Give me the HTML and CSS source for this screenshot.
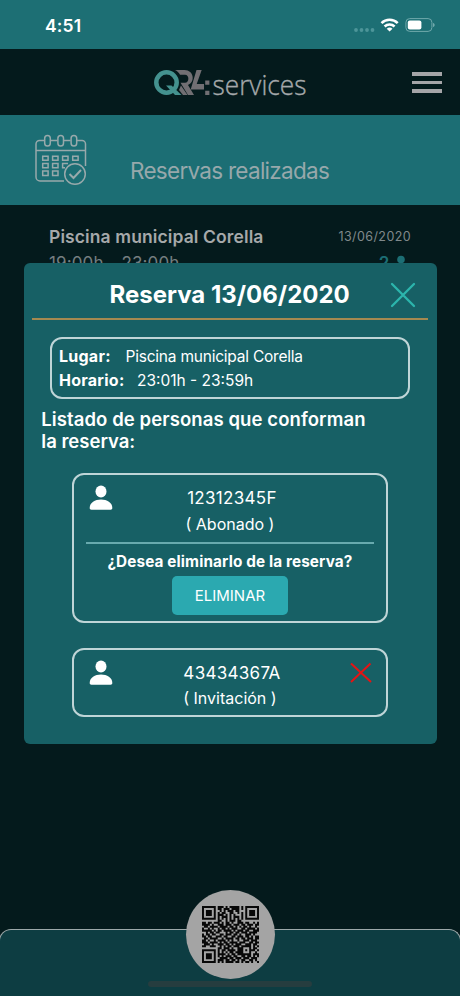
FILE: index.html
```html
<!DOCTYPE html>
<html lang="es">
<head>
<meta charset="utf-8">
<meta name="viewport" content="width=device-width, initial-scale=1">
<title>Reservas realizadas</title>
<link rel="stylesheet" href="styles.css">
</head>
<body>
<div class="screen">
  <div class="status">
    <span class="time">4:51</span>
    <svg class="signals" width="82" height="16" viewBox="0 0 82 16">
      <g fill="#4d9599"><circle cx="3" cy="13" r="1.9"/><circle cx="8.500" cy="13" r="1.900"/><circle cx="14" cy="13" r="1.900"/><circle cx="19.500" cy="13" r="1.900"/></g>
      <g fill="none" stroke="#fff" stroke-width="2.600"><path d="M28.500 6.100a11.600 11.600 0 0 1 16.200 0"/><path d="M31.600 9.500a7.300 7.300 0 0 1 10 0"/></g>
      <path d="M33.700 11.700a4.300 4.300 0 0 1 5.800 0L36.600 14.500z" fill="#fff"/>
      <rect x="52.900" y="1.600" width="26" height="12.800" rx="3.800" fill="none" stroke="#70a9ac"/>
      <rect x="54.800" y="3.500" width="13.600" height="9" rx="2" fill="#fff"/>
      <path d="M80 6v4c2.200-.6 2.200-3.400 0-4z" fill="#70a9ac"/>
    </svg>
  </div>
  <header class="header">
    <svg class="logo" width="160" height="48" viewBox="0 0 160 48">
      <path d="M23 6h9.500c9.500 0 11 12 3.500 15l6 10h-6l-7.500-12.300h4.500c4.500 0 4.500-8 0-8H28C27 8.700 25 7 23 6z" fill="#716f73"/>
      <path d="M29 21.500l6.500 9.500h-4.500L27 26z" fill="#716f73"/>
      <circle cx="14.500" cy="18.500" r="10.200" fill="none" stroke="#44928f" stroke-width="4.500"/>
      <path d="M14 21.500h5.500L29.500 31H23z" fill="#44928f"/>
      <path d="M44.500 6h5.200l-5 14H52v5.500H38.700z" fill="#716f73"/>
      <path d="M53.200 16.500h4.200v4.200h-4.200zM53.200 26.800h4.200V31h-4.200z" fill="#716f73"/>
      <text class="logo-name" x="60.500" y="30.500" textLength="94" lengthAdjust="spacingAndGlyphs">services</text>
    </svg>
    <div class="burger"><i></i><i></i><i></i></div>
  </header>
  <section class="banner">
    <svg class="calendar" width="52" height="52" viewBox="0 0 52 52" fill="none" stroke="#98a9ab" stroke-width="1.500">
      <path d="M9.500 6.500H4.500a3.500 3.500 0 0 0-3.500 3.500V43a4 4 0 0 0 4 4H29M15.500 6.500h7M28.500 6.500h7M41.500 6.500H47a3.500 3.500 0 0 1 3.500 3.500V32M1 16.500h49.500"/>
      <rect x="9.700" y="1.500" width="5.600" height="10.500" rx="2.800"/><rect x="22.900" y="1.500" width="5.600" height="10.500" rx="2.800"/><rect x="36.100" y="1.500" width="5.600" height="10.500" rx="2.800"/>
      <path d="M7.700 22.200h5.400v4h-5.400zM17.600 22.200H23v4h-5.400zM27.600 22.200H33v4h-5.400zM37.700 22.200h5.400v4h-5.400zM7.700 29.500h5.400v4.200h-5.400zM17.600 29.500H23v4.200h-5.400zM30 33.700h-2.400v-4.200H33M7.700 37h5.400v4.500h-5.400zM17.600 37H23v4.500h-5.400z"/>
      <circle cx="40" cy="40" r="10.300"/><path d="M34.500 40l4 4 7.500-8" stroke-width="2"/>
    </svg>
    <h1>Reservas realizadas</h1>
  </section>
  <article class="booking">
    <div class="row"><strong>Piscina municipal Corella</strong><time>13/06/2020</time></div>
    <div class="row second"><span>19:00h - 23:00h</span>
      <span class="count">2 <svg width="14" height="16" viewBox="0 0 14 16"><circle cx="7" cy="4.500" r="3.800"/><path d="M0 15c0-7 14-7 14 0z"/></svg></span></div>
  </article>

  <section class="modal">
    <div class="modal-head">
      <h2>Reserva 13/06/2020</h2>
      <svg class="close" width="26" height="26" viewBox="0 0 26 26"><path d="M2 2l22 22M24 2L2 24"/></svg>
    </div>
    <div class="place">
      <p><b class="lugar">Lugar:</b><span class="lugar-value">Piscina municipal Corella</span></p>
      <p><b class="horario">Horario:</b><span class="hours">23:01h - 23:59h</span></p>
    </div>
    <h3><span class="l1">Listado de personas que conforman</span><br><span class="l2">la reserva:</span></h3>
    <div class="card first">
      <div class="person">
        <svg class="avatar" width="24" height="26" viewBox="0 0 24 26"><ellipse cx="12" cy="6.500" rx="5.500" ry="6"/><path d="M.7 23C.7 17.500 6 14.500 12 14.500s11.300 3 11.300 8.500c0 1.100-.6 1.700-1.700 1.700H2.400C1.300 24.700.7 24.100.7 23z"/></svg>
        <div><p class="num">12312345F</p><p class="type">( Abonado )</p></div>
      </div>
      <div class="confirm">
        <p class="ask">¿Desea eliminarlo de la reserva?</p>
        <button>ELIMINAR</button>
      </div>
    </div>
    <div class="card second">
      <div class="person">
        <svg class="avatar" width="24" height="26" viewBox="0 0 24 26"><ellipse cx="12" cy="6.500" rx="5.500" ry="6"/><path d="M.7 23C.7 17.500 6 14.500 12 14.500s11.300 3 11.300 8.500c0 1.100-.6 1.700-1.700 1.700H2.400C1.300 24.700.7 24.100.7 23z"/></svg>
        <div><p class="num">43434367A</p><p class="type">( Invitación )</p></div>
        <svg class="remove" width="22" height="22" viewBox="0 0 22 22"><path d="M1 1.500l20 18.500M20.500 1.500L1 20"/></svg>
      </div>
    </div>
  </section>

  <footer class="dock">
    <div class="qr"><svg id="qr" width="57" height="57" viewBox="0 0 29 29"></svg></div>
    <div class="home"></div>
  </footer>
</div>
<script src="qr.js"></script>
</body>
</html>
```
FILE: styles.css
```css
* { box-sizing: border-box; margin: 0; padding: 0; }
body { background: #041a1c; font-family: Inter, "Liberation Sans", sans-serif; }
.screen { position: relative; width: 460px; height: 996px; overflow: hidden; background: #041a1c; }
.status { height: 49px; background: #1d6f74; display: flex; justify-content: space-between; padding: 16px 25px 0 45px; }
.time { color: #fff; font-size: 17.500px; font-weight: 600; line-height: 20px; letter-spacing: .15px; }
.signals { margin-top: 1px; }
.header { height: 66px; display: flex; align-items: flex-start; padding: 15px 18px 0 152px; justify-content: space-between; }
.logo { overflow: visible; }
.logo-name { font-family: "Open Sans", sans-serif; font-weight: 300; font-size: 27px; fill: #a5a9ab; stroke: #a5a9ab; stroke-width: .35px; }
.burger { width: 30px; display: flex; flex-direction: column; gap: 5px; padding-top: 8px; }
.burger i { height: 3.5px; background: #a5a5a8; }
.banner { height: 90px; background: #1c6e74; display: flex; padding: 19px 0 0 35px; }
.banner h1 { color: #97a8ab; font-size: 22.500px; font-weight: 400; line-height: 28px; margin: 23px 0 0 43px; letter-spacing: -.72px; white-space: nowrap; }
.booking { padding: 20px 49px 0; color: #a6a9aa; }
.row { display: flex; justify-content: space-between; line-height: 24px; }
.row strong { font-size: 17.500px; font-weight: 600; letter-spacing: .11px; }
.row time { font-size: 12.500px; color: #80898b; letter-spacing: .4px; }
.row.second { font-size: 17px; color: #757e80; padding-top: 2px; letter-spacing: .13px; }
.count { color: #1c6e74; font-weight: 600; padding-right: 3px; }
.count svg { fill: currentColor; vertical-align: -2px; margin-left: 0; }
.modal { position: absolute; left: 23.500px; top: 263px; width: 413px; height: 481px; background: #176065; border-radius: 6px; color: #fff; }
.modal-head { height: 57px; margin: 0 9px 0 8.500px; border-bottom: 2px solid #a48950; display: flex; padding: 17px 11.600px 0 77.500px; justify-content: space-between; }
.modal-head h2 { font-size: 24px; font-weight: 700; line-height: 30px; white-space: nowrap; }
.close { fill: none; stroke: #2cb5ad; stroke-width: 2.300; margin-top: 2px; stroke-linecap: round; }
.place { margin: 17px 26.500px 0 26.500px; height: 62px; border: 2px solid #bfd5d7; border-radius: 12px; padding: 6px 7px; }
.place p { display: flex; line-height: 23.500px; font-size: 16px; white-space: nowrap; }
.place b { font-weight: 700; letter-spacing: .25px; }
.place span { font-size: 15.500px; }
.place .lugar-value { letter-spacing: -.22px; }
.lugar { width: 66.500px; }
.horario { width: 78px; }
h3 { margin: 9px 17px 0 17.800px; font-size: 18.500px; font-weight: 600; line-height: 22px; white-space: nowrap; }
.l1 { letter-spacing: .09px; }
.card { margin: 25px 48.600px 0 48.500px; height: 69px; border: 2px solid #bfd5d7; border-radius: 12px; padding-top: 10px; }
.card.first { height: 150px; margin-top: 21px; }
.person { position: relative; text-align: center; }
.avatar { position: absolute; left: 15px; top: 0; fill: #fff; }
.remove { position: absolute; right: 14px; top: 2px; stroke: #e51414; stroke-width: 2; fill: none; }
.num { font-size: 17px; line-height: 26px; letter-spacing: .3px; padding-left: 4px; }
.type { font-size: 16px; line-height: 26px; }
.card.second .type { line-height: 25px; }
.confirm { margin: 5px 11.500px 0; border-top: 2px solid #68aaae; text-align: center; }
.ask { font-size: 15.300px; font-weight: 700; line-height: 20px; padding-top: 8px; white-space: nowrap; letter-spacing: .12px; }
button { width: 116px; height: 39px; border: 0; border-radius: 5px; background: #2ba9b0; color: #fff; font: 400 15px Inter, sans-serif; margin-top: 4px; }
.dock { position: absolute; left: -1px; right: -1px; bottom: 0; height: 67px; background: #0d3d42; border: 1px solid #9ca8a9; border-bottom: 0; border-radius: 12px 12px 0 0; }
.qr { position: absolute; left: 185.500px; top: -40px; width: 89px; height: 89px; border-radius: 50%; background: #a4a4a4; display: flex; align-items: center; justify-content: center; }
.home { position: absolute; left: 148px; bottom: 9px; width: 164px; height: 6px; border-radius: 3px; background: #263d3f; }
```
FILE: qr.js
```js
const rows = [
  "11111110111010111110101111111",
  "10000010110111011110101000001",
  "10111010010101110110001011101",
  "10111010101100110010101011101",
  "10111010111010101000101011101",
  "10000010101110101110101000001",
  "11111110101010101010101111111",
  "00000000110010111011000000000",
  "11011011101011010011101100101",
  "11110100111011101110110111011",
  "01101111011110110101011010010",
  "10010100101101011100110111101",
  "11111010110111101011101100111",
  "00101101100010110110111011110",
  "10110110011011101101001110100",
  "11011001110110011011101101011",
  "01101111001011110110110111011",
  "11010010111101010010011101110",
  "11101111010110111101110011011",
  "01110100111011010111001110110",
  "11001110010101101110111110101",
  "00000000110111010011100010110",
  "11111110101101111011101011101",
  "10000010101010110111100010010",
  "10111010111101011011111110111",
  "10111010101011101100110110101",
  "10111010011110110111011101110",
  "10000010111011011010110011010",
  "11111110101011110110101101001"
];
let d = "";
rows.forEach((row, y) => {
  for (const run of row.matchAll(/1+/g)) {
    d += `M${run.index} ${y}h${run[0].length}v1.05h-${run[0].length}z`;
  }
});
const path = document.createElementNS("http://www.w3.org/2000/svg", "path");
path.setAttribute("d", d);
path.setAttribute("fill", "#080808");
document.getElementById("qr").appendChild(path);
```
